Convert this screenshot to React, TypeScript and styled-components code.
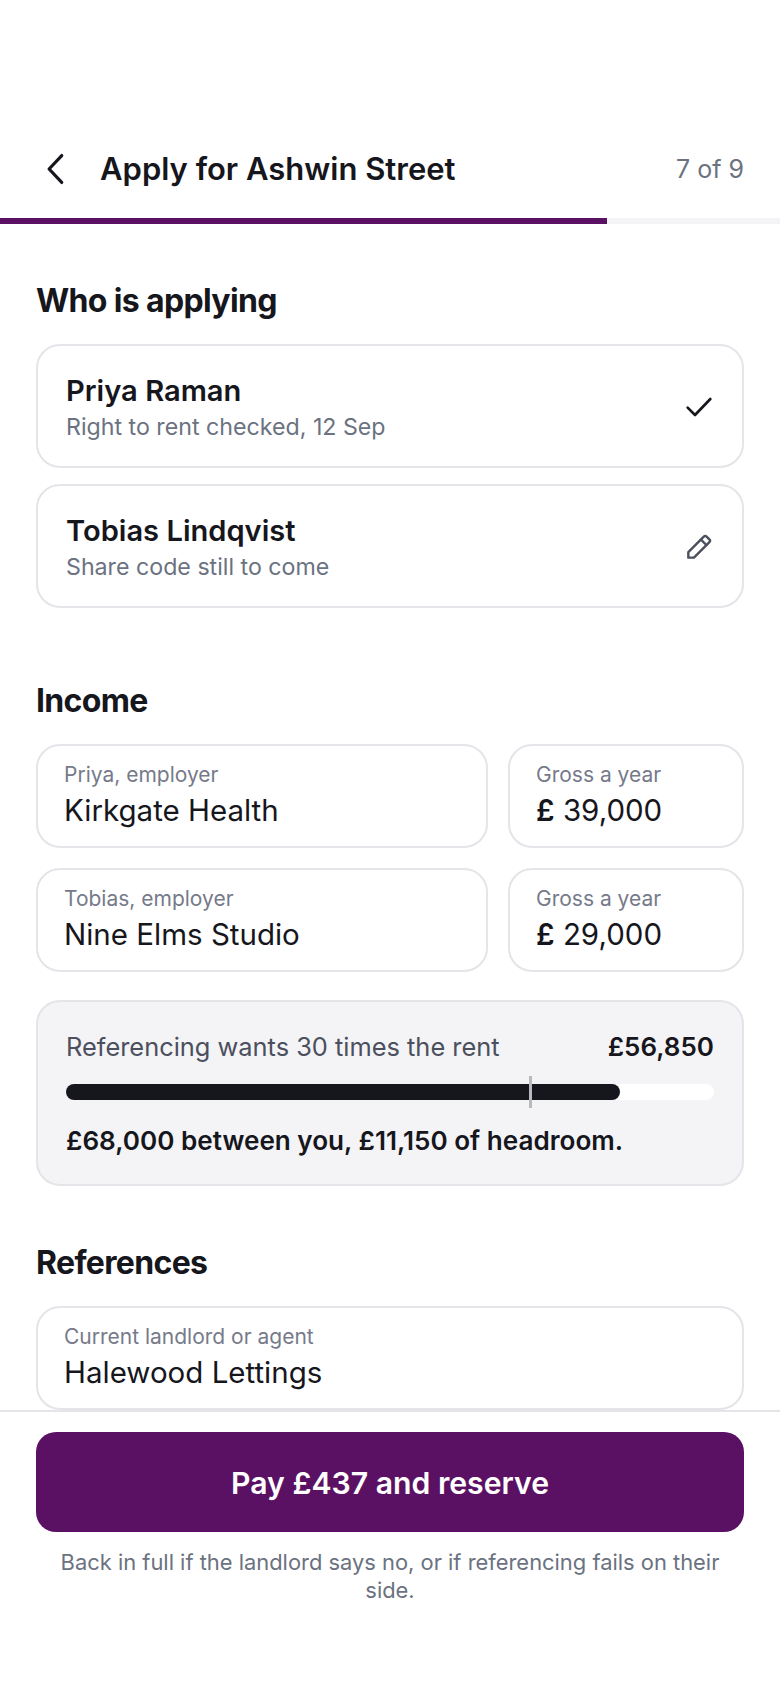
import { FC } from "react";
import styled, { createGlobalStyle } from "styled-components";

const GlobalStyle = createGlobalStyle`
	* {
		box-sizing: border-box;
	}
	html, body {
		margin: 0;
		padding: 0;
		background: #fff;
		font-family: Inter, "Noto Sans", sans-serif;
		color: #16161d;
	}
`;

const Screen = styled.div`
	display: flex;
	flex-direction: column;
	width: 780px;
	height: 1688px;
	overflow: hidden;
	background: #fff;
`;

const Header = styled.header`
	display: flex;
	align-items: center;
	height: 218px;
	padding: 120px 36px 0;
`;

const BackButton = styled.div`
	display: flex;
	width: 64px;
	margin-left: 2px;
	margin-right: -2px;
	color: #16161d;
`;

const Title = styled.h1`
	flex: 1;
	margin: 0;
	font-size: 31px;
	font-weight: 600;
	line-height: 40px;
`;

const Step = styled.span`
	font-size: 25px;
	color: #6b7280;
`;

const Progress = styled.div`
	flex: none;
	height: 6px;
	background: #f4f4f6;
`;

const ProgressFill = styled.div`
	height: 100%;
	background: #5b1163;
`;

const Content = styled.main`
	flex: 1;
	min-height: 0;
	overflow: hidden;
	padding: 57px 36px 0;
`;

const Section = styled.section<{ $spacing: number }>`
	margin-bottom: ${({ $spacing }) => $spacing}px;
`;

const SectionTitle = styled.h2`
	margin: 0 0 23px;
	font-size: 32px;
	font-weight: 700;
	line-height: 40px;
	letter-spacing: -0.65px;
`;

const Stack = styled.div`
	display: flex;
	flex-direction: column;
	gap: 16px;
`;

const Card = styled.div`
	display: flex;
	align-items: center;
	justify-content: space-between;
	height: 124px;
	padding: 2px 28px 0;
	border: 2px solid #e4e4e9;
	border-radius: 24px;
`;

const Name = styled.div`
	font-size: 29.1px;
	font-weight: 560;
	line-height: 38px;
`;

const Note = styled.div`
	margin-top: 1px;
	font-size: 23.2px;
	line-height: 32px;
	color: #6b7280;
`;

const CardIcon = styled.div<{ $muted?: boolean }>`
	display: flex;
	margin-right: -1px;
	color: ${({ $muted }) => ($muted ? "#4b4f5e" : "#16161d")};
`;

const FieldGrid = styled.div`
	display: grid;
	grid-template-columns: 1fr 236px;
	gap: 20px;
`;

const Field = styled.div`
	display: flex;
	flex-direction: column;
	justify-content: center;
	height: 104px;
	padding: 0 26px 2px;
	border: 2px solid #e4e4e9;
	border-radius: 24px;
`;

const FieldLabel = styled.div`
	font-size: 21px;
	line-height: 30px;
	color: #767a8a;
`;

const FieldValue = styled.div`
	font-size: 29.5px;
	line-height: 40px;
`;

const Currency = styled.span`
	font-weight: 600;
`;

const Panel = styled.div`
	margin-top: 28px;
	height: 186px;
	padding: 27px 28px 0;
	background: #f4f4f6;
	border: 2px solid #e4e4e9;
	border-radius: 24px;
`;

const PanelRow = styled.div`
	display: flex;
	justify-content: space-between;
	align-items: center;
	height: 34px;
`;

const PanelLabel = styled.span`
	font-size: 25.4px;
	color: #4b4f5e;
`;

const PanelAmount = styled.span`
	font-size: 26px;
	font-weight: 600;
`;

const Track = styled.div`
	position: relative;
	height: 16px;
	margin-top: 21px;
	border-radius: 8px;
	background: #fff;
`;

const TrackFill = styled.div`
	height: 100%;
	border-radius: 8px;
	background: #16161d;
`;

const Marker = styled.div`
	position: absolute;
	top: -8px;
	bottom: -8px;
	width: 3px;
	background: #b9b9c2;
`;

const PanelSummary = styled.div`
	margin-top: 23px;
	font-size: 26.1px;
	font-weight: 600;
	line-height: 36px;
`;

const Footer = styled.footer`
	flex: none;
	height: 278px;
	padding: 20px 36px 0;
	background: #fff;
	border-top: 2px solid #e4e4e9;
`;

const PayButton = styled.button`
	display: block;
	width: 100%;
	height: 100px;
	padding: 1px 0 0;
	border: 0;
	border-radius: 20px;
	background: #5b1163;
	color: #fff;
	font-family: inherit;
	font-size: 30.2px;
	font-weight: 600;
`;

const Caption = styled.p`
	margin: 16px 0 0;
	font-size: 21.9px;
	line-height: 28px;
	text-align: center;
	color: #6b7280;
`;

const App: FC = () => {
	return (
		<Screen>
			<GlobalStyle />
			<Header>
				<BackButton>
					<svg width="38" height="38" viewBox="0 0 24 24" fill="none" stroke="currentColor" strokeWidth="2" strokeLinecap="round" strokeLinejoin="round">
						<path d="M15 3.5 7 12l8 8.5" />
					</svg>
				</BackButton>
				<Title>Apply for Ashwin Street</Title>
				<Step>7 of 9</Step>
			</Header>
			<Progress>
				<ProgressFill style={{ width: `${(7 / 9) * 100}%` }} />
			</Progress>
			<Content>
				<Section $spacing={73}>
					<SectionTitle>Who is applying</SectionTitle>
					<Stack>
						<Card>
							<div>
								<Name>Priya Raman</Name>
								<Note>Right to rent checked, 12 Sep</Note>
							</div>
							<CardIcon>
								<svg width="32" height="32" viewBox="0 0 24 24" fill="none" stroke="currentColor" strokeWidth="2" strokeLinecap="round" strokeLinejoin="round">
									<path d="M3.5 12.5 9 18 20.5 6" />
								</svg>
							</CardIcon>
						</Card>
						<Card>
							<div>
								<Name>Tobias Lindqvist</Name>
								<Note>Share code still to come</Note>
							</div>
							<CardIcon $muted>
								<svg width="32" height="32" viewBox="0 0 24 24" fill="none" stroke="currentColor" strokeWidth="1.8" strokeLinecap="round" strokeLinejoin="round">
									<path d="M4 20v-4.2L15.6 4.2a1.5 1.5 0 0 1 2.1 0l2.1 2.1a1.5 1.5 0 0 1 0 2.1L8.2 20z" />
									<path d="m13.5 6.5 4 4" />
								</svg>
							</CardIcon>
						</Card>
					</Stack>
				</Section>
				<Section $spacing={57}>
					<SectionTitle>Income</SectionTitle>
					<FieldGrid>
						<Field>
							<FieldLabel>Priya, employer</FieldLabel>
							<FieldValue>Kirkgate Health</FieldValue>
						</Field>
						<Field>
							<FieldLabel>Gross a year</FieldLabel>
							<FieldValue><Currency>£</Currency> 39,000</FieldValue>
						</Field>
						<Field>
							<FieldLabel>Tobias, employer</FieldLabel>
							<FieldValue>Nine Elms Studio</FieldValue>
						</Field>
						<Field>
							<FieldLabel>Gross a year</FieldLabel>
							<FieldValue><Currency>£</Currency> 29,000</FieldValue>
						</Field>
					</FieldGrid>
					<Panel>
						<PanelRow>
							<PanelLabel>Referencing wants 30 times the rent</PanelLabel>
							<PanelAmount>£56,850</PanelAmount>
						</PanelRow>
						<Track>
							<TrackFill style={{ width: "85.5%" }} />
							<Marker style={{ left: "71.5%" }} />
						</Track>
						<PanelSummary>£68,000 between you, £11,150 of headroom.</PanelSummary>
					</Panel>
				</Section>
				<Section $spacing={0}>
					<SectionTitle>References</SectionTitle>
					<Field>
						<FieldLabel>Current landlord or agent</FieldLabel>
						<FieldValue>Halewood Lettings</FieldValue>
					</Field>
				</Section>
			</Content>
			<Footer>
				<PayButton>Pay £437 and reserve</PayButton>
				<Caption>Back in full if the landlord says no, or if referencing fails on their side.</Caption>
			</Footer>
		</Screen>
	);
};

export default App;
